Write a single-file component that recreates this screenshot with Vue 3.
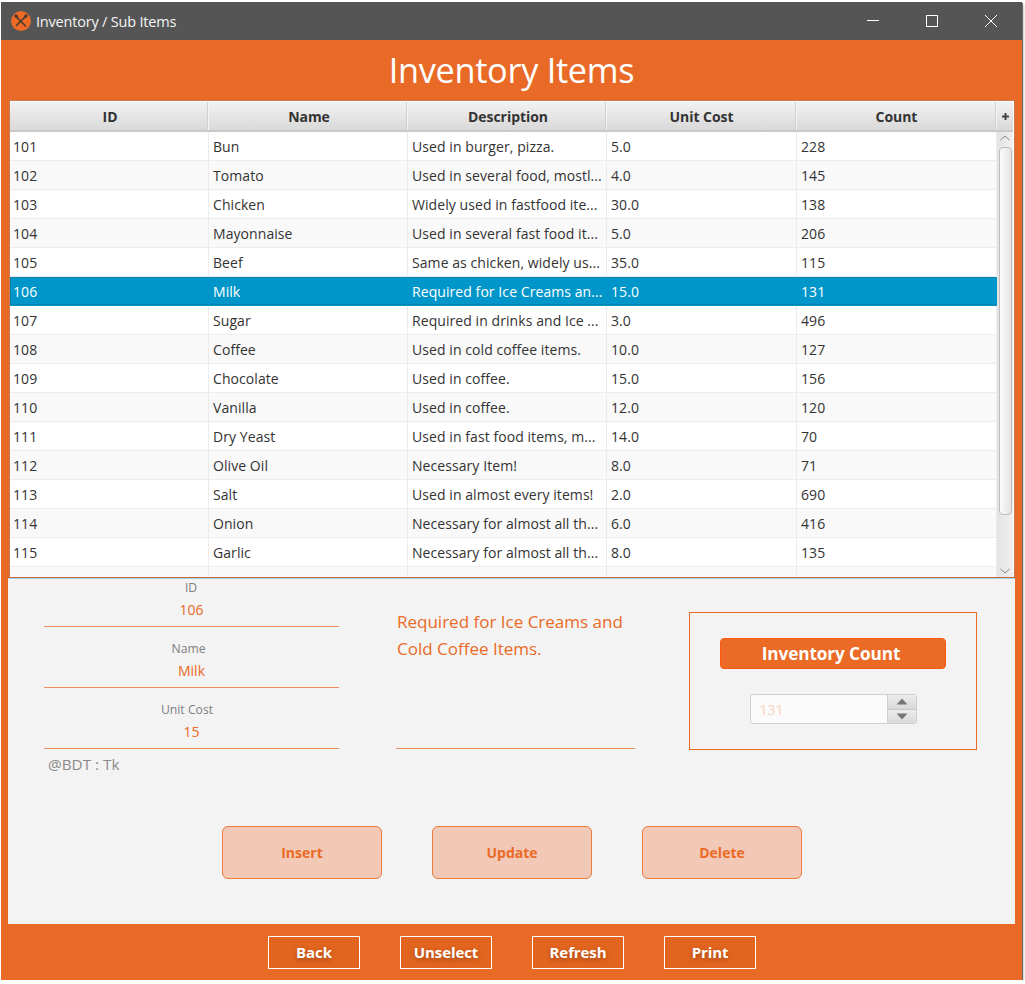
<script setup>
const rows = [
  ['101', 'Bun', 'Used in burger, pizza.', '5.0', '228'],
  ['102', 'Tomato', 'Used in several food, mostl...', '4.0', '145'],
  ['103', 'Chicken', 'Widely used in fastfood ite...', '30.0', '138'],
  ['104', 'Mayonnaise', 'Used in several fast food it...', '5.0', '206'],
  ['105', 'Beef', 'Same as chicken, widely us...', '35.0', '115'],
  ['106', 'Milk', 'Required for Ice Creams an...', '15.0', '131'],
  ['107', 'Sugar', 'Required in drinks and Ice ...', '3.0', '496'],
  ['108', 'Coffee', 'Used in cold coffee items.', '10.0', '127'],
  ['109', 'Chocolate', 'Used in coffee.', '15.0', '156'],
  ['110', 'Vanilla', 'Used in coffee.', '12.0', '120'],
  ['111', 'Dry Yeast', 'Used in fast food items, m...', '14.0', '70'],
  ['112', 'Olive Oil', 'Necessary Item!', '8.0', '71'],
  ['113', 'Salt', 'Used in almost every items!', '2.0', '690'],
  ['114', 'Onion', 'Necessary for almost all th...', '6.0', '416'],
  ['115', 'Garlic', 'Necessary for almost all th...', '8.0', '135'],
  ['', '', '', '', ''],
]
const heads = ['ID', 'Name', 'Description', 'Unit Cost', 'Count']
const fields = [
  { label: 'ID', value: '106' },
  { label: 'Name', value: 'Milk' },
  { label: 'Unit Cost', value: '15' },
]
const actions = ['Insert', 'Update', 'Delete']
const navs = ['Back', 'Unselect', 'Refresh', 'Print']
</script>

<template>
  <div class="window">
    <div class="titlebar">
      <svg class="logo" width="20" height="20" viewBox="0 0 20 20">
        <circle cx="10" cy="10" r="10" fill="#ea6a26" />
        <path d="M5 5.5 L14.5 15" stroke="#4a3a30" stroke-width="1.6" stroke-linecap="round" />
        <path d="M15 5 L5.5 14.5" stroke="#4a3a30" stroke-width="1.6" stroke-linecap="round" />
        <ellipse cx="5.2" cy="5.2" rx="1.6" ry="2.2" transform="rotate(-45 5.2 5.2)" fill="#4a3a30" />
        <ellipse cx="14.8" cy="5.2" rx="1.6" ry="2.2" transform="rotate(45 14.8 5.2)" fill="#4a3a30" />
      </svg>
      <span class="wintitle">Inventory / Sub Items</span>
      <div class="winctrls">
        <svg width="14" height="14" viewBox="0 0 14 14"><path d="M1 6.5H13" stroke="#fff" fill="none" /></svg>
        <svg width="14" height="14" viewBox="0 0 14 14"><rect x="1.5" y="1.5" width="11" height="11" stroke="#fff" fill="none" /></svg>
        <svg width="14" height="14" viewBox="0 0 14 14"><path d="M1 1L13 13M13 1L1 13" stroke="#fff" fill="none" /></svg>
      </div>
    </div>

    <div class="banner">Inventory Items</div>

    <div class="tablewrap">
      <div class="thead">
        <div v-for="h in heads" :key="h" class="th">{{ h }}</div>
        <div class="th plus">
          <svg width="9" height="9" viewBox="0 0 9 9"><path d="M4.5 1V8M1 4.5H8" stroke="#444" stroke-width="2" /></svg>
        </div>
      </div>
      <div class="tbody">
        <div class="rows">
          <div v-for="(r, i) in rows" :key="i" class="tr" :class="{ odd: i % 2 === 1, sel: r[0] === '106' }">
            <div v-for="(c, j) in r" :key="j" class="td">{{ c }}</div>
          </div>
        </div>
        <div class="scroll">
          <svg class="arrow" width="16" height="13" viewBox="0 0 16 13"><path d="M3.5 8L8 4L12.5 8" stroke="#888" fill="none" /></svg>
          <div class="thumb"></div>
          <div class="track"></div>
          <svg class="arrow" width="16" height="13" viewBox="0 0 16 13"><path d="M3.5 5L8 9L12.5 5" stroke="#888" fill="none" /></svg>
        </div>
      </div>
    </div>

    <div class="panel">
      <div class="formrow">
        <div class="fields">
          <div v-for="f in fields" :key="f.label" class="field">
            <div class="flabel">{{ f.label }}</div>
            <div class="fvalue">{{ f.value }}</div>
          </div>
          <div class="currency">@BDT : Tk</div>
        </div>
        <div class="desc">Required for Ice Creams and Cold Coffee Items.</div>
        <div class="countbox">
          <button class="countbtn">Inventory Count</button>
          <div class="spinner">
            <div class="spinval">131</div>
            <div class="spinbtns">
              <div class="spinbtn"><svg width="12" height="7" viewBox="0 0 12 7"><path d="M6 0.5L11.5 6.5H0.5Z" fill="#777" /></svg></div>
              <div class="spinbtn"><svg width="12" height="7" viewBox="0 0 12 7"><path d="M6 6.5L11.5 0.5H0.5Z" fill="#777" /></svg></div>
            </div>
          </div>
        </div>
      </div>
      <div class="actions">
        <button v-for="a in actions" :key="a" class="action">{{ a }}</button>
      </div>
    </div>

    <div class="footer">
      <button v-for="n in navs" :key="n" class="nav">{{ n }}</button>
    </div>
  </div>
</template>

<style>
html, body { margin: 0; background: #fff; }
</style>

<style scoped>
.window {
  width: 1021px;
  height: 978px;
  margin: 2px 0 0 1px;
  background: #e96a26;
  display: flex;
  flex-direction: column;
  box-shadow: 1px 1px 0 #666, 2px 3px 2px #ccc;
  font-family: "Open Sans", "Noto Sans", sans-serif;
  font-size: 14px;
  color: #333;
  overflow: hidden;
}
button { font-family: inherit; margin: 0; padding: 0; cursor: default; }
.titlebar {
  height: 38px;
  flex: none;
  background: #555;
  display: flex;
  align-items: center;
  padding-left: 10px;
  color: #fff;
}
.logo { flex: none; }
.wintitle { margin-left: 5px; font-size: 14.5px; letter-spacing: -0.2px; color: #f4f4f4; }
.winctrls { margin-left: auto; display: flex; gap: 45px; margin-right: 24px; align-items: center; }
.banner {
  height: 60px;
  flex: none;
  color: #fff;
  font-size: 34.3px;
  line-height: 60px;
  text-align: center;
  box-sizing: border-box;
  letter-spacing: -0.3px;
}
.tablewrap {
  height: 478px;
  flex: none;
  margin: 0 7px 0 8px;
  background: #fff;
  border: 1px solid #c9794d;
  border-bottom: 1px solid #c9683a;
  box-sizing: border-box;
  padding: 1px 1px 0 0;
  display: flex;
  flex-direction: column;
}
.thead {
  height: 30px;
  flex: none;
  display: grid;
  grid-template-columns: 199px 199px 199px 190px 200px 16px;
  border-bottom: 2px solid #c9c9c9;
  box-sizing: border-box;
  background: linear-gradient(#f2f2f2, #d9d9d9);
}
.th {
  display: flex;
  align-items: center;
  justify-content: center;
  padding-top: 1px;
  font-weight: 700;
  font-size: 14px;
  letter-spacing: -0.05px;
  color: #333;
  border-right: 1px solid #f4f4f4;
  box-shadow: inset -1px 0 0 #cfcfcf;
}
.th:nth-child(-n+3) { padding-left: 2px; }
.plus { border-right: none; box-shadow: none; padding-top: 0; }
.tbody { flex: 1; display: flex; min-height: 0; overflow: hidden; }
.rows { flex: 1; min-width: 0; }
.tr {
  display: grid;
  grid-template-columns: 199px 199px 199px 190px 200px;
  height: 29px;
  background: #fff;
  box-sizing: border-box;
  border-bottom: 1px solid #ececec;
}
.tr.odd { background: #f9f9f9; }
.tr.sel { background: #0096c9; color: #fff; border-bottom-color: #0096c9; box-shadow: inset 0 0 0 1px #0a84ad; }
.td {
  padding-left: 4px;
  line-height: 30px;
  border-right: 1px solid #ececec;
  white-space: nowrap;
  overflow: hidden;
  letter-spacing: 0.07px;
}
.td:first-child { padding-left: 3px; }
.tr.sel .td { border-right-color: #0096c9; }
.scroll {
  width: 16px;
  flex: none;
  background: linear-gradient(90deg, #e3e3e3, #f0f0f0);
  display: flex;
  flex-direction: column;
  align-items: center;
}
.arrow { flex: none; }
.thumb {
  width: 13px;
  height: 368px;
  margin-top: 2px;
  flex: none;
  box-sizing: border-box;
  border: 1px solid #bdbdbd;
  border-radius: 4px;
  background: linear-gradient(90deg, #fbfbfb, #e4e4e4);
}
.track { flex: 1; }
.panel {
  height: 346px;
  flex: none;
  margin: 0 7px;
  background: #f3f3f3;
  box-shadow: inset 0 1px 0 #9fd3e8;
  display: flex;
  flex-direction: column;
}
.formrow { display: flex; align-items: flex-start; height: 248px; flex: none; }
.fields { width: 295px; margin-left: 36px; flex: none; }
.field {
  height: 61px;
  box-sizing: border-box;
  border-bottom: 1px solid #ee8f5c;
  text-align: center;
}
.field:first-child { height: 49px; padding-top: 1px; }
.field + .field { padding-top: 13px; }
.flabel { font-size: 12.2px; color: #7f7f7f; line-height: 17px; padding-right: 6px; }
.field:first-child .flabel { padding-right: 1px; }
.field:nth-child(3) .flabel { padding-right: 9px; }
.fvalue { font-size: 14px; color: #ea6a26; line-height: 20px; margin-top: 4px; }
.currency { margin: 5px 0 0 4px; font-size: 15.3px; color: #8a8a8a; line-height: 20px; }
.desc {
  width: 239px;
  height: 171px;
  margin: 0 0 0 57px;
  padding: 30px 0 0 1px;
  box-sizing: border-box;
  flex: none;
  font-size: 17px;
  line-height: 27px;
  color: #ea6a26;
  border-bottom: 1px solid #ee8f5c;
}
.countbox {
  width: 288px;
  height: 138px;
  margin: 34px 0 0 54px;
  flex: none;
  box-sizing: border-box;
  border: 1px solid #ea6a26;
  display: flex;
  flex-direction: column;
  align-items: center;
  padding-top: 25px;
}
.countbtn {
  width: 226px;
  height: 31px;
  flex: none;
  padding-right: 4px;
  background: #ea6a26;
  border: 1px solid #ff5a10;
  border-radius: 4px;
  color: #fff;
  font-size: 17.2px;
  font-weight: 700;
  letter-spacing: -0.1px;
}
.spinner {
  width: 167px;
  height: 30px;
  margin-top: 25px;
  flex: none;
  display: flex;
  box-sizing: border-box;
  border: 1px solid #cfcfcf;
  border-radius: 3px;
  background: #fbfbfb;
}
.spinval { flex: 1; padding-left: 9px; line-height: 30px; color: #f9d3bd; }
.spinbtns { width: 28px; flex: none; display: flex; flex-direction: column; border-left: 1px solid #cfcfcf; }
.spinbtn {
  flex: 1;
  display: flex;
  align-items: center;
  justify-content: center;
  background: linear-gradient(#ececec, #d9d9d9);
}
.spinbtn + .spinbtn { border-top: 1px solid #c6c6c6; }
.actions { display: flex; gap: 50px; margin: 0 0 0 214px; }
.action {
  width: 160px;
  height: 53px;
  background: #f1c9b6;
  border: 1px solid #ee7a3c;
  border-radius: 6px;
  color: #ea6a26;
  font-size: 14px;
  font-weight: 700;
}
.footer {
  height: 56px;
  flex: none;
  display: flex;
  gap: 40px;
  justify-content: center;
  padding: 12px 0 0 1px;
  box-sizing: border-box;
  background: #e96a26;
}
.nav {
  width: 92px;
  height: 33px;
  padding-bottom: 2px;
  background: #e2651f;
  border: 1px solid #fff;
  color: #fff;
  font-size: 15px;
  font-weight: 700;
  letter-spacing: -0.1px;
  text-shadow: 0 2px 5px rgba(90, 40, 10, 0.45);
}
</style>
